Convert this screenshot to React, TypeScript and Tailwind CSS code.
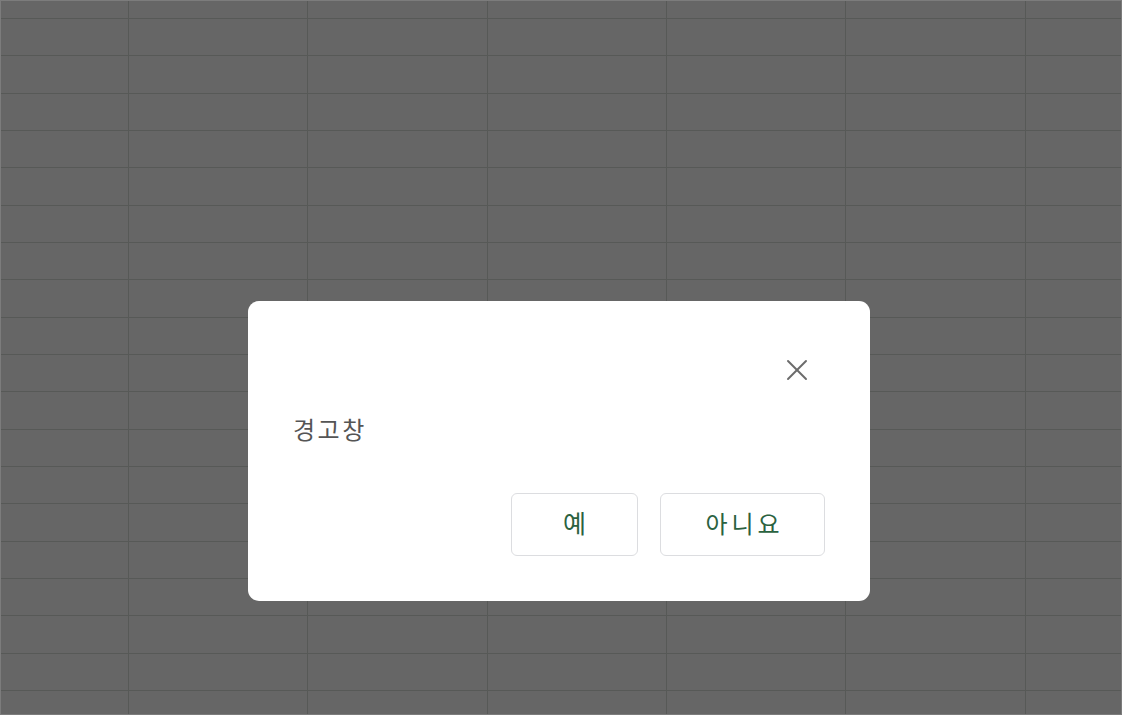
import { X } from 'lucide-react';

const COLS = [128, 179, 180, 179, 179, 180, 97];
const ROW_COUNT = 19;

function SheetGrid() {
    return (
        <div className="flex flex-col w-full h-full overflow-hidden">
            <div className="flex shrink-0 h-[18px] border-b border-[#575957]">
                {COLS.map((w, i) => (
                    <div key={i} style={{ width: w }} className="shrink-0 h-full border-r border-[#575957] last:border-r-0" />
                ))}
            </div>
            {Array.from({ length: ROW_COUNT }).map((_, r) => (
                <div key={r} className="flex shrink-0 h-[37.33px] border-b border-[#575957]">
                    {COLS.map((w, i) => (
                        <div key={i} style={{ width: w }} className="shrink-0 h-full border-r border-[#575957] last:border-r-0" />
                    ))}
                </div>
            ))}
        </div>
    );
}

function AlertDialog() {
    return (
        <div className="absolute left-[247px] top-[300px] w-[622px] h-[300px] bg-white rounded-[11px] flex flex-col px-[45px] pt-[45px] pb-[45px]">
            <div className="flex justify-end items-center h-[48px]">
                <button className="w-[40px] h-[40px] mr-[8px] flex items-center justify-center text-[#6b6b6b]">
                    <X size={36} strokeWidth={1.3} />
                </button>
            </div>
            <div className="mt-[23px] h-[24px] leading-[24px] text-[24px] tracking-[2.5px] text-[#555555]">
                경고창
            </div>
            <div className="mt-auto flex justify-end gap-[22px]">
                <button className="w-[127px] h-[63px] pb-[3px] rounded-[6px] border border-[#dcdde0] text-[25px] text-[#2b6240] flex items-center justify-center">
                    예
                </button>
                <button className="w-[165px] h-[63px] pb-[3px] rounded-[6px] border border-[#dcdde0] text-[24px] text-[#2b6240] tracking-[4px] flex items-center justify-center">
                    <span className="-mr-[4px]">아니요</span>
                </button>
            </div>
        </div>
    );
}

export default function App() {
    return (
        <div
            className="relative w-[1122px] h-[715px] bg-[#666666] border border-[#7c7c7c] overflow-hidden"
            style={{ fontFamily: '"Noto Sans CJK KR", "Noto Sans", sans-serif' }}
        >
            <SheetGrid />
            <AlertDialog />
        </div>
    );
}
